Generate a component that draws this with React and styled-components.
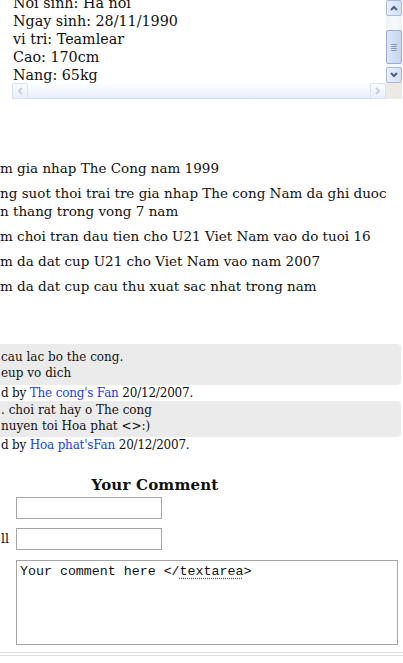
import React from "react";
import styled, { createGlobalStyle } from "styled-components";

/**
 * =Global
 ******************************/

const GlobalStyle = createGlobalStyle`
	html, body {
		margin: 0;
		padding: 0;
		background: #fff;
		overflow: hidden;
	}

	body {
		color: #111;
		font-family: "DejaVu Serif", Georgia, serif;
		font-size: 13.5px;
	}
`;

/**
 * =Styles
 ******************************/

const Page = styled.div`
	display: flex;
	flex-direction: column;
	width: 403px;
	height: 663px;
	overflow: hidden;
`;

// Profile box with its (fake) XP style scrollbars
const InfoBox = styled.div`
	display: grid;
	grid-template-columns: 1fr 16px;
	grid-template-rows: 83px 16px;
	margin: 0 1px 0 12px;
`;

const InfoView = styled.div`
	overflow: hidden;
	padding-left: 1px;
`;

const InfoLines = styled.div`
	margin-top: -6px;
	font-size: 14.3px;
	line-height: 18px;
	white-space: nowrap;
`;

const VBar = styled.div`
	display: flex;
	flex-direction: column;
	background: linear-gradient(to right, #eef2fa, #f8fafd 50%, #eef2fa);
`;

const VTrack = styled.div`
	flex: 1;
	display: flex;
	flex-direction: column;
`;

const ArrowButton = styled.div`
	flex: none;
	width: 16px;
	height: 16px;
	box-sizing: border-box;
	display: flex;
	align-items: center;
	justify-content: center;
	border: 1px solid ${(p) => (p.$disabled ? "#d9e2f2" : "#a9bad9")};
	border-radius: 2px;
	background: ${(p) =>
		p.$disabled
			? "linear-gradient(#fbfcff, #e9effa)"
			: "linear-gradient(to right, #e9effc, #d3def6)"};

	svg {
		width: 8px;
		height: 8px;
		stroke: ${(p) => (p.$disabled ? "#c4cfe2" : "#4d5f82")};
		stroke-width: 2;
		fill: none;
	}
`;

const Thumb = styled.div`
	margin-top: 14px;
	height: 34px;
	box-sizing: border-box;
	display: flex;
	align-items: center;
	justify-content: center;
	border: 1px solid #9aaed5;
	border-radius: 2px;
	background: linear-gradient(to right, #dce5f8, #c6d5f3);
`;

const Grip = styled.div`
	width: 6px;
	height: 7px;
	background: repeating-linear-gradient(
		#8d9bb3 0 1px,
		transparent 1px 2px
	);
`;

const HBar = styled.div`
	display: flex;
	box-sizing: border-box;
	border-bottom: 1px solid #d2dcef;
	background: linear-gradient(#fdfeff, #e8eefa);
`;

const HTrack = styled.div`
	flex: 1;
`;

const Corner = styled.div`
	background: #ece9e7;
`;

// Achievements
const Achievements = styled.ul`
	list-style: none;
	margin: 60px 0 0;
	padding: 0;
`;

const Achievement = styled.li`
	margin-bottom: 7px;
	line-height: 18px;
	white-space: nowrap;
`;

// Comments
const Comments = styled.div`
	margin-top: 42px;
	font-size: 12px;
	line-height: 16px;
	white-space: nowrap;
`;

const CommentBody = styled.div`
	margin-right: 2px;
	padding: ${(p) => p.$pad};
	background: #ebebeb;
	border-radius: 0 4px 4px 0;
`;

const Byline = styled.div`
	padding: 0 1px;
	letter-spacing: -0.2px;
`;

const Author = styled.a`
	color: #1b3cff;
	text-decoration: none;
`;

// Comment form
const FormTitle = styled.h3`
	width: 310px;
	margin: 23px 0 3px;
	font-size: 15px;
	line-height: 18px;
	text-align: center;
	letter-spacing: 0.2px;
`;

const Form = styled.form`
	display: grid;
	grid-template-columns: 16px 1fr;
	row-gap: 9px;
	margin: 0 5px 0 0;
`;

const Label = styled.label`
	font-size: 12.5px;
	line-height: 22px;
	padding-left: 1px;
	white-space: nowrap;
	overflow: hidden;
`;

const TextInput = styled.input`
	width: 146px;
	height: 22px;
	box-sizing: border-box;
	margin: 0;
	border: 1px solid #a6a6a6;
	background: #fff;
`;

const CommentArea = styled.div`
	grid-column: 2;
	margin-top: 1px;
	height: 85px;
	box-sizing: border-box;
	padding: 3px 3px;
	border: 1px solid #a6a6a6;
	font-family: "Liberation Mono", "Courier New", monospace;
	font-size: 13.3px;
	line-height: 15px;
	white-space: nowrap;
`;

const Misspelt = styled.span`
	text-decoration: underline dotted #c0392b;
	text-underline-offset: 3px;
`;

const Rule = styled.div`
	margin-top: 7px;
	height: 2px;
	border-top: 1px solid #dedede;
	border-bottom: 1px solid #dedede;
`;

/**
 * =Data
 ******************************/

const info = [
	"Noi sinh: Ha noi",
	"Ngay sinh: 28/11/1990",
	"vi tri: Teamlear",
	"Cao: 170cm",
	"Nang: 65kg"
];

const achievements = [
	["m gia nhap The Cong nam 1999"],
	[
		"ng suot thoi trai tre gia nhap The cong Nam da ghi duoc",
		"n thang trong vong 7 nam"
	],
	["m choi tran dau tien cho U21 Viet Nam vao do tuoi 16"],
	["m da dat cup U21 cho Viet Nam vao nam 2007"],
	["m da dat cup cau thu xuat sac nhat trong nam"]
];

const comments = [
	{
		lines: ["cau lac bo the cong.", "eup vo dich"],
		author: "The cong's Fan",
		date: "20/12/2007.",
		pad: "5px 1px 4px"
	},
	{
		lines: [". choi rat hay o The cong", "nuyen toi Hoa phat <>:)"],
		author: "Hoa phat'sFan",
		date: "20/12/2007.",
		pad: "1px 1px 3px"
	}
];

/**
 * =Component
 ******************************/

function Chevron({ dir }) {
	const d = {
		up: "M 1,6 L 4,3 L 7,6",
		down: "M 1,2 L 4,5 L 7,2",
		left: "M 6,1 L 3,4 L 6,7",
		right: "M 2,1 L 5,4 L 2,7"
	}[dir];

	return (
		<svg viewBox="0 0 8 8">
			<path d={d} />
		</svg>
	);
}

export default function App() {
	return (
		<Page>
			<GlobalStyle />

			<InfoBox>
				<InfoView>
					<InfoLines>
						{info.map((line) => (
							<div key={line}>{line}</div>
						))}
					</InfoLines>
				</InfoView>

				<VBar>
					<ArrowButton>
						<Chevron dir="up" />
					</ArrowButton>
					<VTrack>
						<Thumb>
							<Grip />
						</Thumb>
					</VTrack>
					<ArrowButton>
						<Chevron dir="down" />
					</ArrowButton>
				</VBar>

				<HBar>
					<ArrowButton $disabled>
						<Chevron dir="left" />
					</ArrowButton>
					<HTrack />
					<ArrowButton $disabled>
						<Chevron dir="right" />
					</ArrowButton>
				</HBar>

				<Corner />
			</InfoBox>

			<Achievements>
				{achievements.map((lines, i) => (
					<Achievement key={`ach-${i}`}>
						{lines.map((line, j) => (
							<div key={j}>{line}</div>
						))}
					</Achievement>
				))}
			</Achievements>

			<Comments>
				{comments.map((c, i) => (
					<div key={`comment-${i}`}>
						<CommentBody $pad={c.pad}>
							{c.lines.map((line) => (
								<div key={line}>{line}</div>
							))}
						</CommentBody>
						<Byline>
							d by <Author href="#">{c.author}</Author> {c.date}
						</Byline>
					</div>
				))}
			</Comments>

			<FormTitle>Your Comment</FormTitle>

			<Form onSubmit={(e) => e.preventDefault()}>
				<Label />
				<TextInput type="text" />

				<Label>ll</Label>
				<TextInput type="text" />

				<CommentArea>
					Your comment here &lt;/<Misspelt>textarea</Misspelt>&gt;
				</CommentArea>
			</Form>

			<Rule />
		</Page>
	);
}
